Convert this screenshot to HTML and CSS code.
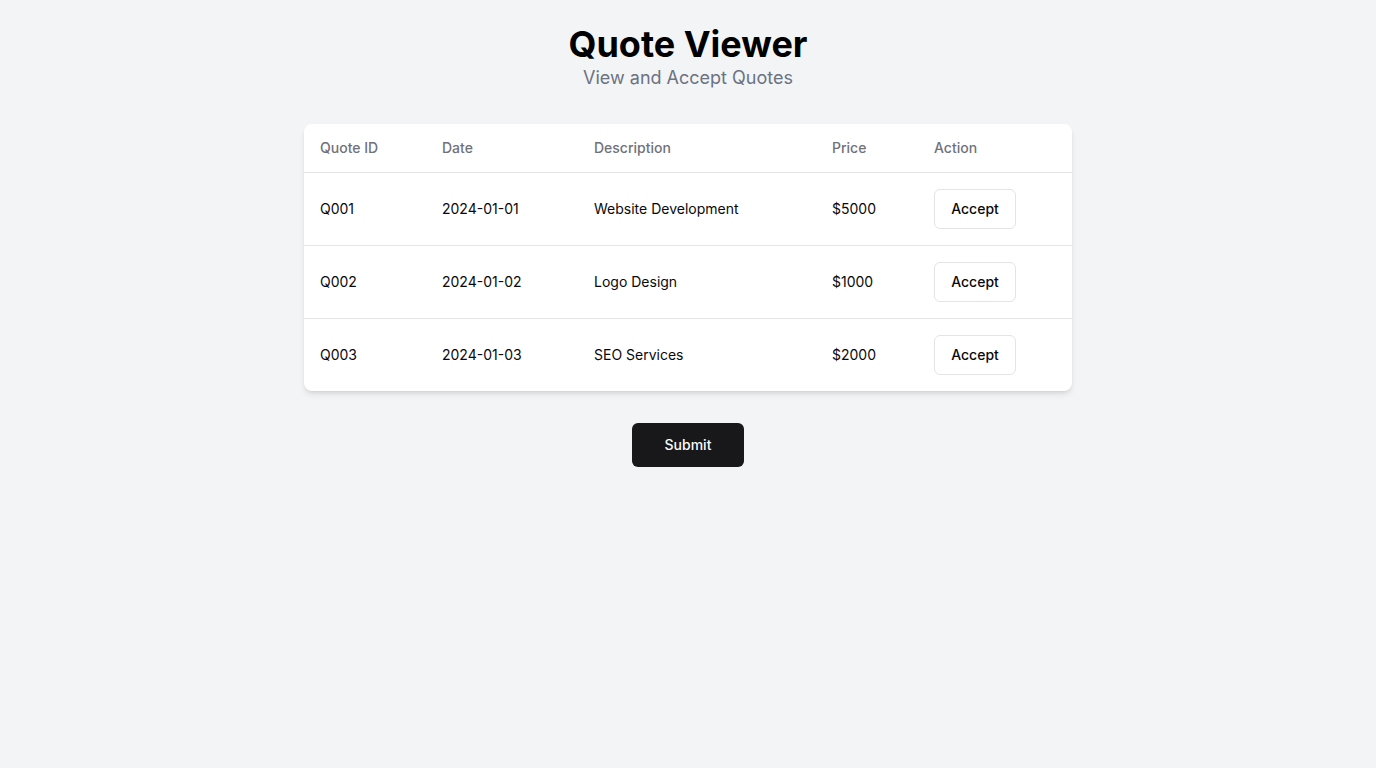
FILE: index.html
```html
<!DOCTYPE html>
<html lang="en">
<head>
<meta charset="utf-8">
<title>Quote Viewer</title>
<link rel="stylesheet" href="styles.css">
</head>
<body>
<main class="page">
  <header class="head">
    <h1 class="title">Quote Viewer</h1>
    <p class="subtitle">View and Accept Quotes</p>
  </header>
  <div class="card">
    <table class="table">
      <colgroup>
        <col class="c1"><col class="c2"><col class="c3"><col class="c4"><col class="c5">
      </colgroup>
      <thead>
        <tr><th>Quote ID</th><th>Date</th><th>Description</th><th>Price</th><th>Action</th></tr>
      </thead>
      <tbody>
        <tr><td>Q001</td><td>2024-01-01</td><td>Website Development</td><td>$5000</td><td><button class="btn-outline">Accept</button></td></tr>
        <tr><td>Q002</td><td>2024-01-02</td><td>Logo Design</td><td>$1000</td><td><button class="btn-outline">Accept</button></td></tr>
        <tr><td>Q003</td><td>2024-01-03</td><td>SEO Services</td><td>$2000</td><td><button class="btn-outline">Accept</button></td></tr>
      </tbody>
    </table>
  </div>
  <div class="actions">
    <button class="btn-primary">Submit</button>
  </div>
</main>
</body>
</html>
```
FILE: styles.css
```css
* { box-sizing: border-box; }
html, body { margin: 0; padding: 0; }
body {
  background: #f3f4f6;
  font-family: Inter, "Liberation Sans", sans-serif;
  color: #09090b;
}
.page {
  padding: 24px;
  display: flex;
  flex-direction: column;
  align-items: center;
}
.head { text-align: center; margin-bottom: 32px; }
.title {
  margin: 0;
  font-size: 36px;
  line-height: 40px;
  font-weight: 700;
  color: #000;
}
.subtitle {
  margin: 0;
  font-size: 18px;
  line-height: 28px;
  color: #6b7280;
}
.card {
  width: 768px;
  background: #fff;
  border-radius: 8px;
  box-shadow: 0 4px 6px -1px rgba(0,0,0,0.1), 0 2px 4px -2px rgba(0,0,0,0.1);
  overflow: hidden;
}
.table {
  width: 100%;
  border-collapse: collapse;
  table-layout: fixed;
  font-size: 14px;
  line-height: 20px;
}
.c1 { width: 122px; }
.c2 { width: 152px; }
.c3 { width: 238px; }
.c4 { width: 102px; }
.c5 { width: 154px; }
.table th {
  height: 48px;
  padding: 0 16px;
  text-align: left;
  font-weight: 500;
  color: #71717a;
  vertical-align: middle;
}
.table thead tr { border-bottom: 1px solid #e4e4e7; }
.table tbody tr { border-bottom: 1px solid #e4e4e7; }
.table tbody tr:last-child { border-bottom: 0; }
.table td {
  padding: 16px;
  vertical-align: middle;
}
.btn-outline {
  width: 82px;
  height: 40px;
  padding: 0;
  border: 1px solid #e4e4e7;
  border-radius: 6px;
  background: #fff;
  font-family: inherit;
  font-size: 14px;
  font-weight: 500;
  color: #09090b;
}
.actions { margin-top: 32px; }
.btn-primary {
  width: 112px;
  height: 44px;
  padding: 0;
  border: 0;
  border-radius: 6px;
  background: #18181b;
  color: #fafafa;
  font-family: inherit;
  font-size: 14px;
  font-weight: 500;
}
```
